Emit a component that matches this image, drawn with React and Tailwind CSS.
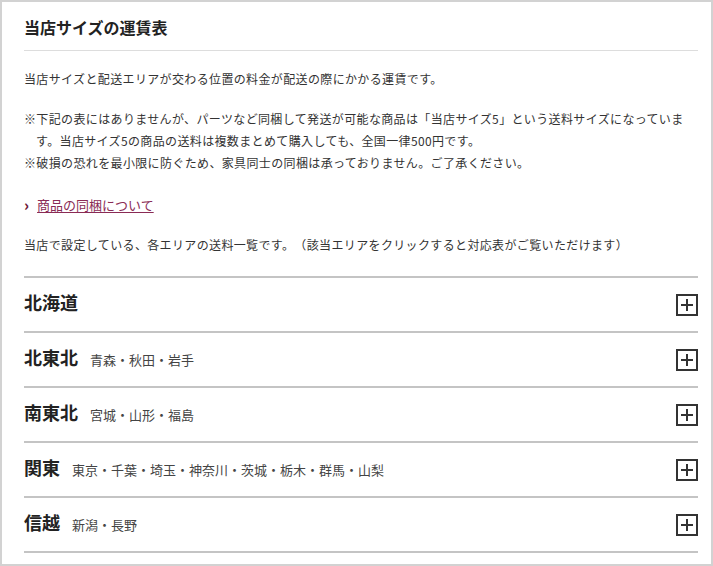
import React from "react";

const areas = [
  { name: "北海道", prefs: "" },
  { name: "北東北", prefs: "青森・秋田・岩手" },
  { name: "南東北", prefs: "宮城・山形・福島" },
  { name: "関東", prefs: "東京・千葉・埼玉・神奈川・茨城・栃木・群馬・山梨" },
  { name: "信越", prefs: "新潟・長野" },
];

// Boxed plus icon used on each accordion row
const PlusBox = () => (
  <svg width="22" height="22" viewBox="0 0 22 22" className="shrink-0">
    <rect x="1" y="1" width="20" height="20" fill="none" stroke="#333" strokeWidth="2" />
    <path d="M5 11h12M11 5v12" stroke="#333" strokeWidth="2" />
  </svg>
);

const AreaRow = ({ area }) => (
  <div className="flex h-[55px] items-center justify-between border-t-2 border-[#c4c4c4]">
    <div className="flex items-baseline pb-[5px]">
      <span className="text-[18px] font-bold text-[#222]">{area.name}</span>
      {area.prefs && (
        <span className="ml-3 text-[13px] text-[#444]">{area.prefs}</span>
      )}
    </div>
    <PlusBox />
  </div>
);

export default function App() {
  return (
    <div
      className="h-[566px] w-[713px] border-2 border-[#d2d2d2] bg-white pl-[22px] pr-[13px] pt-[13px] text-[#333] [text-spacing-trim:space-all]"
      style={{ fontFamily: '"Noto Sans CJK JP", "Noto Sans", sans-serif' }}
    >
      <h1 className="border-b border-[#ddd] pb-[11px] text-[16px] font-bold leading-[24px] text-[#222]">
        当店サイズの運賃表
      </h1>

      <p className="mt-[17px] text-[12px] leading-[22px] tracking-[0.03em]">
        当店サイズと配送エリアが交わる位置の料金が配送の際にかかる運賃です。
      </p>

      <div className="mt-[18px] text-[12px] leading-[22px] tracking-[0.03em]">
        <p className="pl-[1em] -indent-[1em]">
          ※下記の表にはありませんが、パーツなど同梱して発送が可能な商品は「当店サイズ5」という送料サイズになっています。当店サイズ5の商品の送料は複数まとめて購入しても、全国一律500円です。
        </p>
        <p className="pl-[1em] -indent-[1em]">
          ※破損の恐れを最小限に防ぐため、家具同士の同梱は承っておりません。ご了承ください。
        </p>
      </div>

      <div className="mt-[20px] flex items-center text-[13px] leading-[22px]">
        <span className="mr-[8px] text-[15px] font-black text-[#6e1836]">›</span>
        <a href="#" className="text-[#8a2b55] underline underline-offset-2">
          商品の同梱について
        </a>
      </div>

      <p className="mt-[18px] text-[12px] leading-[22px] tracking-[0.03em]">
        当店で設定している、各エリアの送料一覧です。（該当エリアをクリックすると対応表がご覧いただけます）
      </p>

      <div className="mt-[20px] border-b-2 border-[#c4c4c4]">
        {areas.map((area) => (
          <AreaRow key={area.name} area={area} />
        ))}
      </div>
    </div>
  );
}
